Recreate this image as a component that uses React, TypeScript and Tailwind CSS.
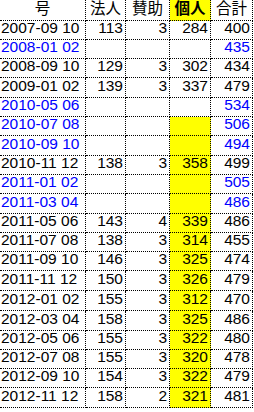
import React from "react";

type Row = [string, string, string, string, string, boolean];

const rows: Row[] = [
  ["2007-09 10", "113", "3", "284", "400", false],
  ["2008-01 02", "", "", "", "435", true],
  ["2008-09 10", "129", "3", "302", "434", false],
  ["2009-01 02", "139", "3", "337", "479", false],
  ["2010-05 06", "", "", "", "534", true],
  ["2010-07 08", "", "", "", "506", true],
  ["2010-09 10", "", "", "", "494", true],
  ["2010-11 12", "138", "3", "358", "499", false],
  ["2011-01 02", "", "", "", "505", true],
  ["2011-03 04", "", "", "", "486", true],
  ["2011-05 06", "143", "4", "339", "486", false],
  ["2011-07 08", "138", "3", "314", "455", false],
  ["2011-09 10", "146", "3", "325", "474", false],
  ["2011-11 12", "150", "3", "326", "479", false],
  ["2012-01 02", "155", "3", "312", "470", false],
  ["2012-03 04", "158", "3", "325", "486", false],
  ["2012-05 06", "155", "3", "322", "480", false],
  ["2012-07 08", "155", "3", "320", "478", false],
  ["2012-09 10", "154", "3", "322", "479", false],
  ["2012-11 12", "158", "2", "321", "481", false],
];

const tall = [false, false, false, true, false, false, true, false, false, true, false, false, false, true, true, true, false, false, false, true];

const cell = "flex items-end border-r border-b border-dotted border-black pb-[3px] leading-[16px] whitespace-nowrap";

export default function App() {
  return (
    <div
      className="w-[254px] h-[412px] bg-white text-[15.5px] text-black"
      style={{ fontFamily: '"Liberation Sans", Arial, "Noto Sans CJK JP", sans-serif' }}
    >
      <div className="flex h-[21px]">
        <div className={`${cell} w-[86px] justify-center`}>号</div>
        <div className={`${cell} w-[40px] justify-center`}>法人</div>
        <div className={`${cell} w-[44px] justify-center`}>賛助</div>
        <div className={`${cell} w-[41px] justify-center bg-[#ffff00] font-bold`}>個人</div>
        <div className={`${cell} w-[42px] justify-center`}>合計</div>
      </div>
      {rows.map((r, i) => {
        const color = r[5] ? "text-[#0000ff]" : "text-black";
        const h = tall[i] ? "h-[20px]" : "h-[19px]";
        const yellow = i >= 5 ? "bg-[#ffff00]" : "bg-white";
        return (
          <div key={i} className={`flex ${h} ${color}`}>
            <div className={`${cell} w-[86px] justify-start pl-[1px]`}>{r[0]}</div>
            <div className={`${cell} w-[40px] justify-end pr-[2px]`}>{r[1]}</div>
            <div className={`${cell} w-[44px] justify-end pr-[2px]`}>{r[2]}</div>
            <div className={`${cell} w-[41px] justify-end pr-[2px] ${yellow}`}>{r[3]}</div>
            <div className={`${cell} w-[42px] justify-end pr-[2px]`}>{r[4]}</div>
          </div>
        );
      })}
    </div>
  );
}
